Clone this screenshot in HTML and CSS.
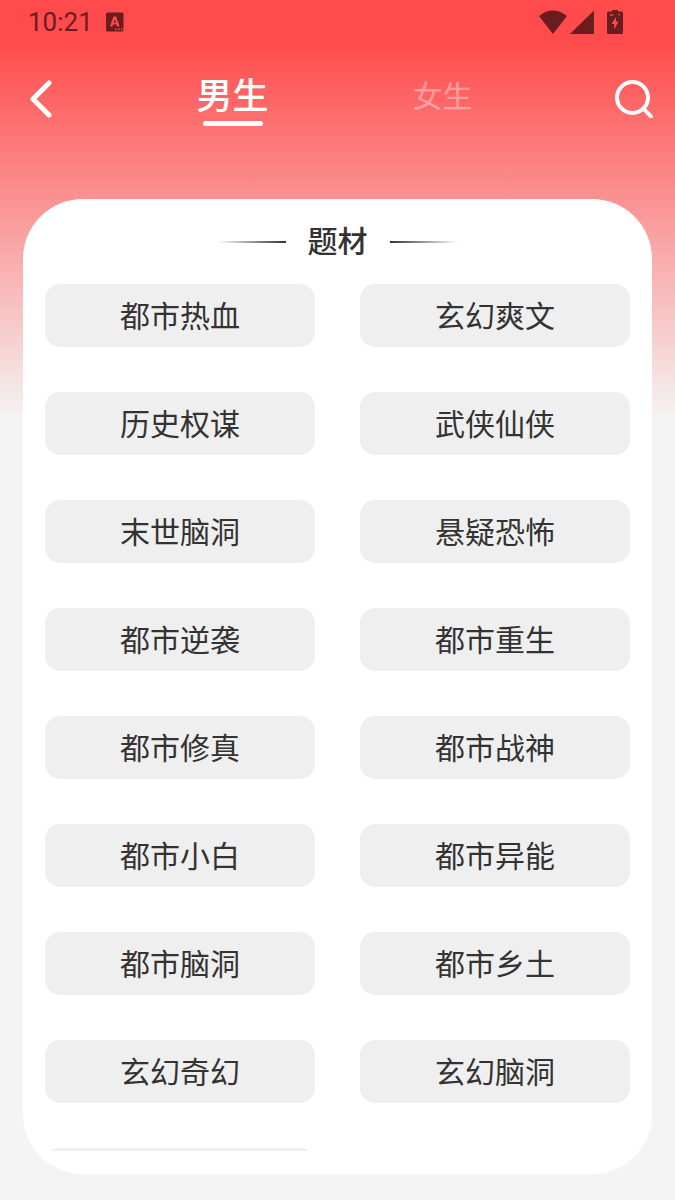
FILE: index.html
```html
<!DOCTYPE html>
<html lang="zh-CN">
<head>
  <meta charset="UTF-8">
  <meta name="viewport" content="width=device-width, initial-scale=1.0">
  <title>题材</title>
  <link rel="stylesheet" href="styles.css">
</head>
<body>

<div class="status-bar">
  <span class="time">10:21</span>
  <svg class="app-icon" width="18" height="20" viewBox="0 0 18 20">
    <path fill="currentColor" fill-rule="evenodd" d="M1.500 0.500h14.500a1.500 1.500 0 0 1 1.500 1.500v16a1.500 1.500 0 0 1-1.500 1.500h-14.500a1.500 1.500 0 0 1-1.500-1.500v-16a1.500 1.500 0 0 1 1.500-1.500zM7.500 4.500 4 14.500h2.300l.7-2h3.600l.7 2h2.300l-3.500-10zM8.800 7.300l1.200 3.500h-2.400zM9 16.500v1.500h1.600v-1.500zM12 16.500v1.500h1.600v-1.500zM15 16.500v1.500h1.500v-1.500z"/>
  </svg>
  <div class="status-icons">
    <svg width="28" height="24" viewBox="0 0 28 24">
      <path fill="currentColor" d="M0 6C4 2.500 9 .500 14 .500S24 2.500 28 6L14 24z"/>
    </svg>
    <svg width="24" height="24" viewBox="0 0 24 24">
      <path fill="currentColor" d="M24 .500V24H0z"/>
    </svg>
    <svg class="battery" width="16" height="24" viewBox="0 0 16 24">
      <path fill="currentColor" fill-rule="evenodd" d="M5 0h6v1.500h3.500a1.500 1.500 0 0 1 1.500 1.500v19.500a1.500 1.500 0 0 1-1.500 1.500h-13a1.500 1.500 0 0 1-1.500-1.500v-19.500a1.500 1.500 0 0 1 1.500-1.500h3.500zM9 7l-4.500 7h2.700v5.500l4.300-8h-2.500zM3 4.500v1.500l3.500-.5v-1zM10.500 4l2 2v-2z"/>
    </svg>
  </div>
</div>

<header class="header">
  <button class="icon-btn" aria-label="返回">
    <svg width="24" height="38" viewBox="0 0 24 38">
      <path d="M20 3 4 19l16 16" fill="none" stroke="#fff" stroke-width="5" stroke-linecap="round" stroke-linejoin="round"/>
    </svg>
  </button>
  <nav class="tabs">
    <button class="tab active">男生</button>
    <button class="tab">女生</button>
  </nav>
  <button class="icon-btn" aria-label="搜索">
    <svg width="38" height="38" viewBox="0 0 38 38">
      <circle cx="17.500" cy="17.500" r="15.500" fill="none" stroke="#fff" stroke-width="4"/>
      <path d="M28.500 28.500l7.500 8" stroke="#fff" stroke-width="4" stroke-linecap="round"/>
    </svg>
  </button>
</header>

<main class="card">
  <h2 class="card-title">题材</h2>
  <div class="list">
    <button class="item">都市热血</button>
    <button class="item">玄幻爽文</button>
    <button class="item">历史权谋</button>
    <button class="item">武侠仙侠</button>
    <button class="item">末世脑洞</button>
    <button class="item">悬疑恐怖</button>
    <button class="item">都市逆袭</button>
    <button class="item">都市重生</button>
    <button class="item">都市修真</button>
    <button class="item">都市战神</button>
    <button class="item">都市小白</button>
    <button class="item">都市异能</button>
    <button class="item">都市脑洞</button>
    <button class="item">都市乡土</button>
    <button class="item">玄幻奇幻</button>
    <button class="item">玄幻脑洞</button>
    <button class="item" aria-label="更多"></button>
  </div>
</main>

</body>
</html>
```
FILE: styles.css
```css
* {
  box-sizing: border-box;
}
body {
  margin: 0;
  height: 100vh;
  display: flex;
  flex-direction: column;
  font-family: Roboto, "Noto Sans CJK SC", sans-serif;
  color: #333;
  background: #f4f4f4 linear-gradient(#ff4b4b 40px, #f4f4f4 420px) no-repeat;
}
button {
  border: none;
  padding: 0;
  background: none;
  font-family: inherit;
  color: inherit;
  cursor: pointer;
}
svg {
  display: block;
}

/* status bar */
.status-bar {
  flex: none;
  display: flex;
  align-items: center;
  height: 44px;
  padding: 0 52px 0 28px;
  color: #6b1c1e;
}
.time {
  font-size: 26px;
}
.app-icon {
  margin-left: 13px;
}
.status-icons {
  display: flex;
  gap: 3px;
  margin-left: auto;
}
.battery {
  margin-left: 10px;
}

/* header */
.header {
  flex: none;
  display: flex;
  align-items: center;
  justify-content: space-between;
  height: 110px;
  padding: 0 22px;
}
.icon-btn {
  flex: 0 0 38px;
}
.icon-btn svg {
  margin: 0 auto;
}
.tabs {
  flex: 0 1 420px;
  display: flex;
}
.tab {
  flex: 1;
  display: flex;
  flex-direction: column;
  align-items: center;
  justify-content: center;
  height: 60px;
  font-size: 30px;
  line-height: 48px;
  color: rgba(255, 255, 255, 0.4);
}
.tab::after {
  content: "";
  width: 60px;
  height: 5px;
  border-radius: 3px;
}
.tab.active {
  font-size: 36px;
  font-weight: 500;
  color: #fff;
}
.tab.active::after {
  background: #fff;
}

/* card */
.card {
  flex: 1;
  min-height: 0;
  display: flex;
  flex-direction: column;
  margin: 45px 23px 26px;
  padding: 20px 22px 23px;
  border-radius: 60px;
  background: #fff;
}
.card-title {
  flex: none;
  display: flex;
  align-items: center;
  justify-content: center;
  gap: 22px;
  margin: 0 0 20px;
  font-size: 30px;
  font-weight: 500;
  line-height: 45px;
}
.card-title::before,
.card-title::after {
  content: "";
  width: 68px;
  height: 2px;
  background: linear-gradient(to right, transparent, #333);
}
.card-title::after {
  background: linear-gradient(to left, transparent, #333);
}
.list {
  flex: 1;
  min-height: 0;
  display: grid;
  grid-template-columns: 1fr 1fr;
  grid-auto-rows: 63px;
  gap: 45px;
  overflow-y: auto;
  scrollbar-width: none;
}
.item {
  padding-top: 2px;
  border-radius: 15px;
  background: #efefef;
  font-size: 30px;
  line-height: 45px;
}
```
